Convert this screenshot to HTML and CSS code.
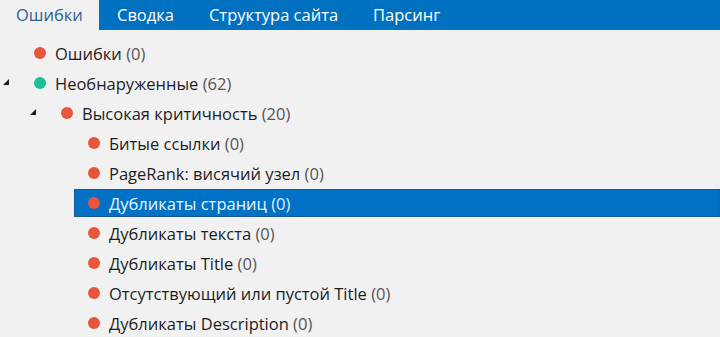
FILE: index.html
```html
<!DOCTYPE html>
<html lang="ru">
<head>
    <meta charset="UTF-8">
    <title>Ошибки</title>
    <link rel="stylesheet" href="styles.css">
</head>
<body>
    <div class="tabs">
        <div class="tab active">Ошибки</div>
        <div class="tab">Сводка</div>
        <div class="tab">Структура сайта</div>
        <div class="tab">Парсинг</div>
    </div>
    <ul class="tree">
        <li class="row lv0">
            <span class="arrow"></span>
            <div class="item"><span class="dot"></span>Ошибки <span class="cnt">(0)</span></div>
        </li>
        <li class="row lv0">
            <span class="arrow open"></span>
            <div class="item"><span class="dot green"></span>Необнаруженные <span class="cnt">(62)</span></div>
        </li>
        <li class="row lv1">
            <span class="arrow open"></span>
            <div class="item"><span class="dot"></span>Высокая критичность <span class="cnt">(20)</span></div>
        </li>
        <li class="row lv2">
            <span class="arrow"></span>
            <div class="item"><span class="dot"></span>Битые ссылки <span class="cnt">(0)</span></div>
        </li>
        <li class="row lv2">
            <span class="arrow"></span>
            <div class="item"><span class="dot"></span>PageRank: висячий узел <span class="cnt">(0)</span></div>
        </li>
        <li class="row lv2">
            <span class="arrow"></span>
            <div class="item selected"><span class="dot"></span>Дубликаты страниц <span class="cnt">(0)</span></div>
        </li>
        <li class="row lv2">
            <span class="arrow"></span>
            <div class="item"><span class="dot"></span>Дубликаты текста <span class="cnt">(0)</span></div>
        </li>
        <li class="row lv2">
            <span class="arrow"></span>
            <div class="item"><span class="dot"></span>Дубликаты Title <span class="cnt">(0)</span></div>
        </li>
        <li class="row lv2">
            <span class="arrow"></span>
            <div class="item"><span class="dot"></span>Отсутствующий или пустой Title <span class="cnt">(0)</span></div>
        </li>
        <li class="row lv2">
            <span class="arrow"></span>
            <div class="item"><span class="dot"></span>Дубликаты Description <span class="cnt">(0)</span></div>
        </li>
    </ul>
</body>
</html>
```

FILE: styles.css
```css
*{
    padding: 0;
    margin: 0;
    box-sizing: border-box;
}
body{
    background: #f1f1f2;
    font-family: "Open Sans", "Noto Sans", sans-serif;
    font-size: 16.5px;
    color: #1e1e1e;
    overflow: hidden;
}
.tabs{
    display: flex;
    height: 30px;
    background: #0071c1;
}
.tab{
    padding: 0 17px 0 18px;
    line-height: 29px;
    color: #ffffff;
}
.tab.active{
    width: 99px;
    padding-left: 16px;
    background: #f1f1f2;
    color: #2e5f92;
}
.tree{
    list-style: none;
    padding-top: 8px;
}
.row{
    display: flex;
    height: 30px;
}
.lv1{
    padding-left: 27px;
}
.lv2{
    padding-left: 54px;
}
.arrow{
    width: 20px;
    position: relative;
}
.arrow.open::after{
    content: "";
    position: absolute;
    left: 3px;
    top: 11px;
    border-style: solid;
    border-width: 0 0 6px 6px;
    border-color: transparent transparent #1e1e1e transparent;
}
.item{
    flex: 1;
    display: flex;
    align-items: center;
    height: 28px;
    margin-top: 1px;
    padding-left: 14px;
    white-space: pre;
}
.dot{
    width: 12px;
    height: 12px;
    border-radius: 50%;
    background: #e9553b;
    margin-right: 9px;
}
.dot.green{
    background: #1fbe9b;
}
.cnt{
    color: #555555;
}
.selected{
    background: #0071c5;
    border: 1px solid #1a5a99;
    padding-left: 13px;
    color: #e8f6ff;
}
.selected .cnt{
    color: #d8efff;
}
```
